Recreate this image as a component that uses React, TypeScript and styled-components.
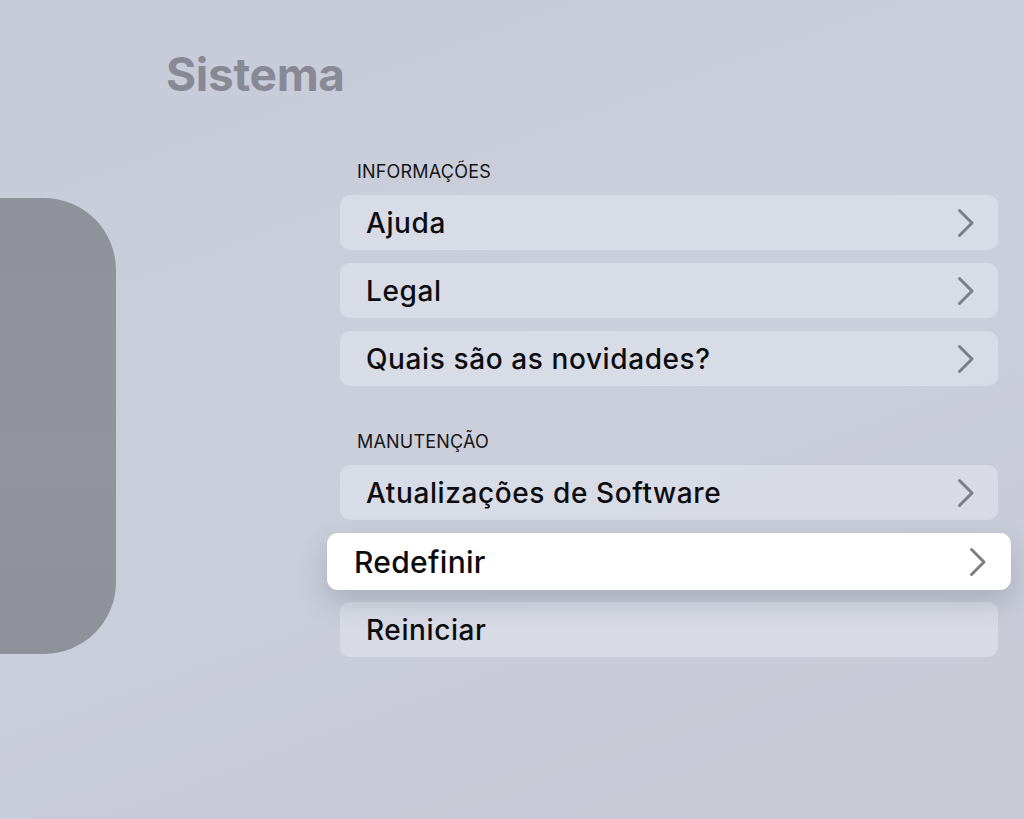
import React from 'react';
import styled, { createGlobalStyle } from 'styled-components';

const GlobalStyle = createGlobalStyle`
  html, body {
    margin: 0;
    padding: 0;
    overflow: hidden;
  }
  body {
    font-family: Inter, "Noto Sans", "Liberation Sans", sans-serif;
  }
`;

const Page = styled.div`
  width: 1024px;
  height: 819px;
  overflow: hidden;
  background: linear-gradient(160deg, #c7cbd9 0%, #cbcfdb 45%, #c8cad6 100%);
  display: flex;
  flex-direction: column;
`;

const Title = styled.h1`
  margin: 0;
  padding: 46px 0 0 166px;
  font-size: 46px;
  line-height: 56px;
  font-weight: 700;
  color: #878a94;
  letter-spacing: -0.3px;
`;

const Content = styled.div`
  display: flex;
  align-items: flex-start;
  margin-top: 45px;
`;

const Artwork = styled.div`
  width: 116px;
  flex-shrink: 0;
  padding-top: 51px;
`;

const Device = styled.div`
  width: 200px;
  height: 456px;
  margin-left: -84px;
  border-radius: 72px;
  background: linear-gradient(180deg, #8f929b 0%, #93959e 60%, #8e909a 100%);
`;

const List = styled.div`
  margin-left: 224px;
  width: 658px;
  display: flex;
  flex-direction: column;
`;

const SectionLabel = styled.div<{ $gap?: boolean }>`
  padding-left: 17px;
  margin-top: ${p => (p.$gap ? '18px' : '0')};
  height: 48px;
  display: flex;
  align-items: center;
  font-size: 18px;
  font-weight: 400;
  color: #151515;
  letter-spacing: 0.2px;
`;

const Row = styled.div<{ $focused?: boolean }>`
  display: flex;
  align-items: center;
  justify-content: space-between;
  box-sizing: border-box;
  height: ${p => (p.$focused ? '57px' : '55px')};
  margin: ${p => (p.$focused ? '0 -13px 12px -13px' : '0 0 13px 0')};
  padding: ${p => (p.$focused ? '0 24px 0 27px' : '0 23px 0 26px')};
  border-radius: ${p => (p.$focused ? '11px' : '10px')};
  background: ${p => (p.$focused ? '#ffffff' : 'rgba(228, 231, 240, 0.55)')};
  box-shadow: ${p => (p.$focused ? '0 12px 28px rgba(60, 64, 80, 0.22)' : 'none')};
  position: relative;
  z-index: ${p => (p.$focused ? 1 : 0)};
`;

const RowLabel = styled.span<{ $focused?: boolean }>`
  font-size: ${p => (p.$focused ? '30px' : '28px')};
  font-weight: 500;
  color: #0c0c0e;
  letter-spacing: ${p => (p.$focused ? '0.3px' : '0.6px')};
`;

const Chevron = () => (
  <svg width="18" height="30" viewBox="0 0 18 30" fill="none">
    <path d="M2.5 2.5L15 15L2.5 27.5" stroke="#7d7f87" strokeWidth="3" strokeLinecap="round" strokeLinejoin="round" />
  </svg>
);

interface Item {
  label: string;
  chevron: boolean;
  focused?: boolean;
}

const sections: { title: string; items: Item[] }[] = [
  {
    title: 'INFORMAÇÕES',
    items: [
      { label: 'Ajuda', chevron: true },
      { label: 'Legal', chevron: true },
      { label: 'Quais são as novidades?', chevron: true },
    ],
  },
  {
    title: 'MANUTENÇÃO',
    items: [
      { label: 'Atualizações de Software', chevron: true },
      { label: 'Redefinir', chevron: true, focused: true },
      { label: 'Reiniciar', chevron: false },
    ],
  },
];

export default function App() {
  return (
    <Page>
      <GlobalStyle />
      <Title>Sistema</Title>
      <Content>
        <Artwork>
          <Device />
        </Artwork>
        <List>
          {sections.map((s, i) => (
            <React.Fragment key={s.title}>
              <SectionLabel $gap={i > 0}>{s.title}</SectionLabel>
              {s.items.map(item => (
                <Row key={item.label} $focused={item.focused}>
                  <RowLabel $focused={item.focused}>{item.label}</RowLabel>
                  {item.chevron && <Chevron />}
                </Row>
              ))}
            </React.Fragment>
          ))}
        </List>
      </Content>
    </Page>
  );
}
